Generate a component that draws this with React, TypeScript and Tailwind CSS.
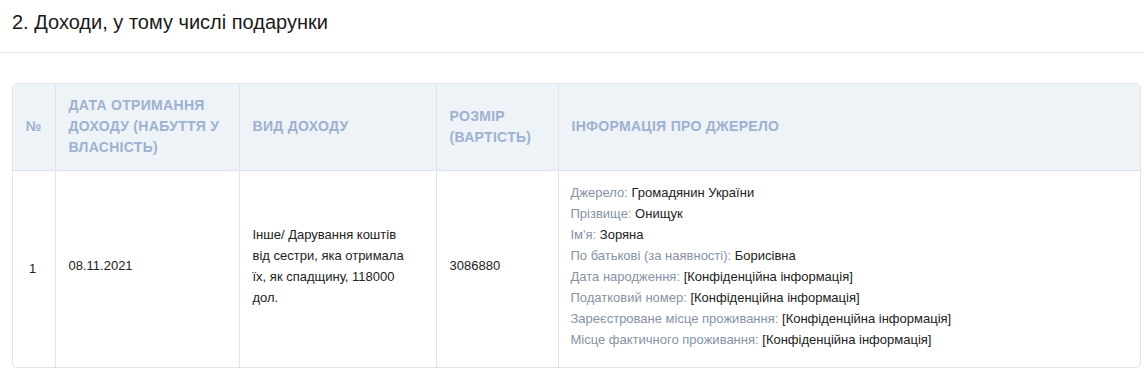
import React from 'react';

const infoRows: [string, string][] = [
  ['Джерело:', 'Громадянин України'],
  ['Прізвище:', 'Онищук'],
  ["Ім'я:", 'Зоряна'],
  ['По батькові (за наявності):', 'Борисівна'],
  ['Дата народження:', '[Конфіденційна інформація]'],
  ['Податковий номер:', '[Конфіденційна інформація]'],
  ['Зареєстроване місце проживання:', '[Конфіденційна інформація]'],
  ['Місце фактичного проживання:', '[Конфіденційна інформація]'],
];

const th = 'px-[13px] py-[11px] text-left align-middle font-bold uppercase text-[14px] leading-[21px] tracking-[0.3px] text-[#9fb1d0] border-r border-[#dfe4ea]';
const td = 'px-[13px] pt-[11px] pb-[17px] align-middle text-[13px] leading-[21px] text-[#222] border-r border-[#dfe4ea]';

export default function App() {
  return (
    <div className="w-[1144px] h-[372px] bg-white overflow-hidden" style={{ fontFamily: '"Liberation Sans", Arial, sans-serif' }}>
      <div className="border-b border-[#e3e3e3] px-[12px] pt-[9px] pb-[16px]">
        <h2 className="text-[20px] leading-[27px] text-[#1a1a1a]">2. Доходи, у тому числі подарунки</h2>
      </div>

      <div className="ml-[12px] mt-[30px] w-[1129px] border border-[#dfe4ea] rounded-[5px] overflow-hidden">
        <table className="w-full border-collapse table-fixed">
          <colgroup>
            <col className="w-[42px]" />
            <col className="w-[184px]" />
            <col className="w-[197px]" />
            <col className="w-[122px]" />
            <col />
          </colgroup>
          <thead className="bg-[#eef3f8]">
            <tr className="border-b border-[#dfe4ea] h-[86px]">
              <th className={`${th} !text-center !px-0`}>№</th>
              <th className={th}>Дата отримання доходу (набуття у власність)</th>
              <th className={th}>Вид доходу</th>
              <th className={th}>Розмір (вартість)</th>
              <th className={`${th} border-r-0`}>Інформація про джерело</th>
            </tr>
          </thead>
          <tbody>
            <tr className="h-[195px]">
              <td className={`${td} pl-[16px] !py-[14px]`}>1</td>
              <td className={td}>08.11.2021</td>
              <td className={`${td} pr-[30px]`}>Інше/ Дарування коштів від сестри, яка отримала їх, як спадщину, 118000 дол.</td>
              <td className={td}>3086880</td>
              <td className={`${td} border-r-0 pl-[12px] leading-[20.8px]`}>
                {infoRows.map(([label, value]) => (
                  <div key={label}>
                    <span className="text-[#8592a6]">{label}</span> {value}
                  </div>
                ))}
              </td>
            </tr>
          </tbody>
        </table>
      </div>
    </div>
  );
}
